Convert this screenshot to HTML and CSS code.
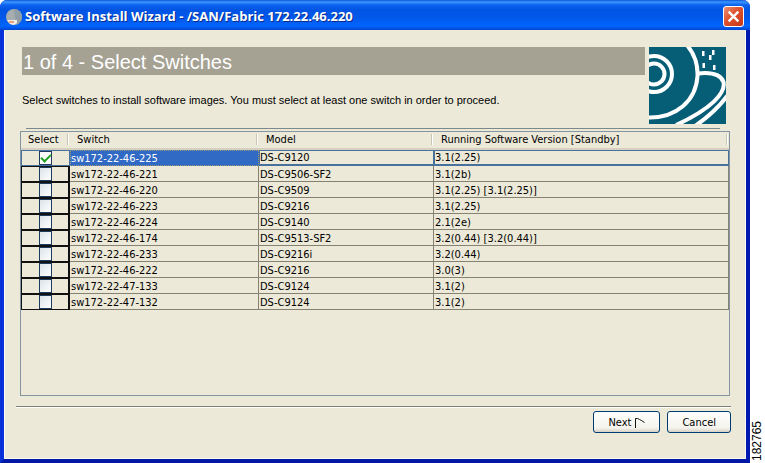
FILE: index.html
```html
<!DOCTYPE html>
<html lang="en">
<head>
<meta charset="utf-8">
<title>Software Install Wizard</title>
<link rel="stylesheet" href="styles.css">
</head>
<body>
<div class="window">
  <header class="titlebar">
    <svg class="app-icon" viewBox="0 0 16 16" aria-hidden="true">
      <circle cx="8" cy="8" r="8" fill="#a5adb0"/>
      <path d="M8 0a8 8 0 0 1 8 8c0 4-3 7-5 7.500L9 9Z" fill="#8f9da5"/>
      <path d="M1 11h10v3l-3 2-4-1Z" fill="#f4efe9"/>
      <path d="M3 12h5v2H3Z" fill="#e9a27c"/>
    </svg>
    <span class="title">Software Install Wizard - /SAN/Fabric 172.22.46.220</span>
    <button class="close" type="button" aria-label="Close">
      <svg viewBox="0 0 12 12" aria-hidden="true"><path d="M1.500 1.500l9 9M10.500 1.500l-9 9" stroke="#fff" stroke-width="2.200"/></svg>
    </button>
  </header>
  <main class="content">
    <div class="intro">
      <div class="intro-text">
        <h1>1 of 4 - Select Switches</h1>
        <p>Select switches to install software images. You must select at least one switch in order to proceed.</p>
      </div>
      <svg class="logo" viewBox="0 0 77 77" aria-hidden="true">
        <rect width="77" height="77" fill="#065d76"/>
        <g fill="none" stroke="#fff" stroke-width="4">
          <circle cx="5" cy="27" r="10.500"/>
          <circle cx="5" cy="27" r="18"/>
          <path d="M37-3C46 7 49 17 48.500 29C47 54 27 71 0 70.500"/>
          <path d="M49 26.500C63 25 72 28 74.500 35C77 46 62 62 27 78"/>
          <path d="M79 48C70 60 61 69 46 79"/>
        </g>
        <path d="M53 4h2.500v5H53ZM63 3h2.500v5H63ZM60 8h2.500v5H60ZM53.500 16H56v5h-2.500ZM64 18h2.500v5H64Z" fill="#fff"/>
      </svg>
    </div>
    <div class="rule"></div>
    <div class="list">
      <table>
        <colgroup><col class="c-select"><col class="c-switch"><col class="c-model"><col></colgroup>
        <thead>
          <tr><th scope="col">Select</th><th scope="col">Switch</th><th scope="col">Model</th><th scope="col">Running Software Version [Standby]</th></tr>
        </thead>
        <tbody>
          <tr class="selected"><td><input type="checkbox" aria-label="sw172-22-46-225" checked></td><td>sw172-22-46-225</td><td>DS-C9120</td><td>3.1(2.25)</td></tr>
          <tr><td><input type="checkbox" aria-label="sw172-22-46-221"></td><td>sw172-22-46-221</td><td>DS-C9506-SF2</td><td>3.1(2b)</td></tr>
          <tr><td><input type="checkbox" aria-label="sw172-22-46-220"></td><td>sw172-22-46-220</td><td>DS-C9509</td><td>3.1(2.25) [3.1(2.25)]</td></tr>
          <tr><td><input type="checkbox" aria-label="sw172-22-46-223"></td><td>sw172-22-46-223</td><td>DS-C9216</td><td>3.1(2.25)</td></tr>
          <tr><td><input type="checkbox" aria-label="sw172-22-46-224"></td><td>sw172-22-46-224</td><td>DS-C9140</td><td>2.1(2e)</td></tr>
          <tr><td><input type="checkbox" aria-label="sw172-22-46-174"></td><td>sw172-22-46-174</td><td>DS-C9513-SF2</td><td>3.2(0.44) [3.2(0.44)]</td></tr>
          <tr><td><input type="checkbox" aria-label="sw172-22-46-233"></td><td>sw172-22-46-233</td><td>DS-C9216i</td><td>3.2(0.44)</td></tr>
          <tr><td><input type="checkbox" aria-label="sw172-22-46-222"></td><td>sw172-22-46-222</td><td>DS-C9216</td><td>3.0(3)</td></tr>
          <tr><td><input type="checkbox" aria-label="sw172-22-47-133"></td><td>sw172-22-47-133</td><td>DS-C9124</td><td>3.1(2)</td></tr>
          <tr><td><input type="checkbox" aria-label="sw172-22-47-132"></td><td>sw172-22-47-132</td><td>DS-C9124</td><td>3.1(2)</td></tr>
        </tbody>
      </table>
    </div>
    <footer class="actions">
      <button class="btn" type="button">Next <svg viewBox="0 0 11 11" aria-hidden="true"><path d="M1.500 11V1.500h2l2 1 2 1 3 2" fill="none" stroke="#111"/></svg></button>
      <button class="btn" type="button">Cancel</button>
    </footer>
  </main>
</div>
<div class="figure-id">182765</div>
</body>
</html>
```
FILE: styles.css
```css
* { box-sizing: border-box; }

body {
  margin: 0;
  min-height: 100vh;
  display: flex;
  background: #fff;
  color: #000;
  font: 11px/15px "DejaVu Sans Condensed", "DejaVu Sans", sans-serif;
}

button { font: inherit; color: inherit; }

.window {
  flex: 1;
  min-width: 0;
  display: flex;
  flex-direction: column;
  background: #ece9d8;
  border: solid #0831d9;
  border-width: 0 4px 4px;
  border-color: #0026c4 #0019b0 #0019a5 #0831d9;
  border-radius: 7px 7px 0 0;
}

.titlebar {
  display: flex;
  align-items: center;
  gap: 3px;
  height: 30px;
  margin: 0 -4px;
  padding: 3px 6px 0;
  border-radius: 7px 7px 0 0;
  background: linear-gradient(#0a58d8 0, #3b95ff 2px, #0b62ee 5px, #0054e3 10px, #0058ea 18px, #0066ff 26px, #0046d0 30px);
  color: #fff;
}

.app-icon { width: 16px; height: 16px; }

.title {
  flex: 1;
  font-family: "Open Sans", sans-serif;
  font-size: 13px;
  font-weight: 700;
  text-shadow: 1px 1px #0a2a8c;
  white-space: nowrap;
}

.close {
  display: grid;
  place-items: center;
  width: 21px;
  height: 21px;
  padding: 0;
  border: 1px solid #fff;
  border-radius: 3px;
  background: linear-gradient(135deg, #ec9078, #e0502c 45%, #c53a18);
}

.close svg { width: 13px; height: 13px; }

.content {
  flex: 1;
  display: flex;
  flex-direction: column;
  padding: 17px 14px 25px 12px;
  border: 1px solid #f8fbf4;
  border-top: 0;
}

.intro {
  display: flex;
  gap: 4px;
  padding: 0 5px;
}

.intro-text { flex: 1; min-width: 0; }

h1 {
  margin: 0;
  height: 28px;
  padding-left: 1px;
  background: #a5a294;
  color: #fff;
  font: 20px/30px "Liberation Sans", Arial, sans-serif;
}

p {
  margin: 18px 0 0;
  font-family: "Liberation Sans", Arial, sans-serif;
}

.logo { width: 77px; height: 77px; }

.rule {
  margin: 4px 11px 2px 9px;
  border-top: 1px solid #7c8a8b;
}

.list {
  flex: 1;
  margin: 0 1px 10px 3px;
  border: 1px solid #8295a0;
}

table {
  width: 100%;
  table-layout: fixed;
  border-collapse: separate;
  border-spacing: 0;
}

.c-select { width: 49px; }
.c-switch { width: 189px; }
.c-model { width: 175px; }

th {
  position: relative;
  height: 18px;
  padding: 0 0 1px 7px;
  border-bottom: 2px solid #d5d0c0;
  font-weight: 400;
  text-align: left;
  white-space: nowrap;
}

th::after {
  content: "";
  position: absolute;
  top: 2px;
  right: 1px;
  width: 2px;
  height: 11px;
  background: linear-gradient(90deg, #c7c5b2 50%, #fff 50%);
}

td {
  height: 16px;
  padding: 2px 0 0 1px;
  border: solid #858274;
  border-width: 0 1px 1px 0;
  line-height: 13px;
  white-space: nowrap;
}

td:first-child {
  padding: 0;
  border: 1px solid #111;
  border-right-width: 2px;
  text-align: center;
}

.selected td {
  padding: 0;
  border: solid #49719e;
  border-width: 1px 1px 2px;
}

.selected td:first-child { border: 1px solid #49719e; }

.selected td:nth-child(2) {
  border: 1px dotted #9c9871;
  background: #316ac5;
  color: #fff;
}

input {
  appearance: none;
  display: block;
  width: 13px;
  height: 14px;
  margin: 0 auto;
  border: 1px solid #1c3b5e;
  background: linear-gradient(135deg, #dce3e8, #fff);
}

input:checked {
  background: #fff;
  display: grid;
  place-items: center;
}

input:checked::before {
  content: "";
  width: 8px;
  height: 4px;
  border: solid #21a121;
  border-width: 0 0 2px 2px;
  transform: translateY(-1px) rotate(-45deg);
}

.actions {
  display: flex;
  justify-content: flex-end;
  gap: 7px;
  padding-top: 4px;
  border-top: 1px solid #817e71;
  box-shadow: inset 0 1px #fff;
  margin-left: -1px;
}

.btn {
  display: flex;
  align-items: center;
  justify-content: center;
  gap: 3px;
  height: 22px;
  padding: 0 14px;
  border: 1px solid #003c74;
  border-radius: 3px;
  background: linear-gradient(#fff, #f4f3ec 80%, #d8d1c4);
}

.btn svg { width: 11px; height: 11px; }

.figure-id {
  width: 15px;
  padding-top: 2px;
  writing-mode: vertical-rl;
  transform: rotate(180deg);
  font: 12px/15px "Liberation Sans", Arial, sans-serif;
}
```
